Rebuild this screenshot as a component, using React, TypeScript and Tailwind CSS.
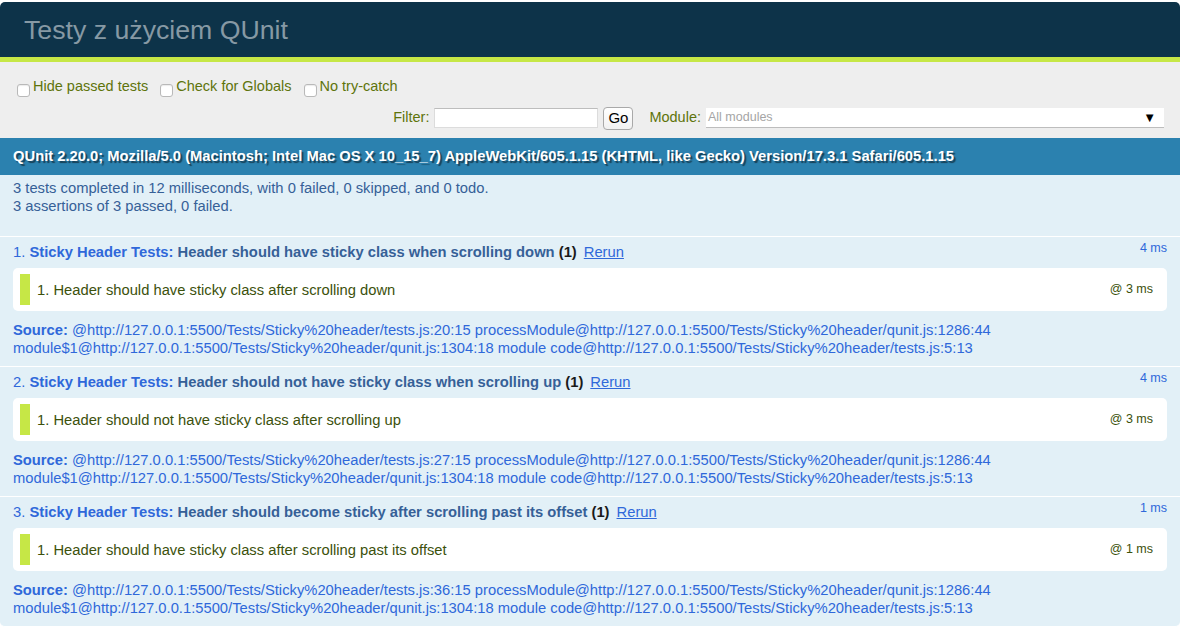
import React from "react";

const tests = [
  {
    n: 1,
    name: "Header should have sticky class when scrolling down",
    rt: "4 ms",
    assert: "Header should have sticky class after scrolling down",
    art: "@ 3 ms",
    line: "20:15",
  },
  {
    n: 2,
    name: "Header should not have sticky class when scrolling up",
    rt: "4 ms",
    assert: "Header should not have sticky class after scrolling up",
    art: "@ 3 ms",
    line: "27:15",
  },
  {
    n: 3,
    name: "Header should become sticky after scrolling past its offset",
    rt: "1 ms",
    assert: "Header should have sticky class after scrolling past its offset",
    art: "@ 1 ms",
    line: "36:15",
  },
];

function Check({ label }: { label: string }) {
  return (
    <label className="flex items-center">
      <span className="inline-block w-[13px] h-[13px] rounded-[3px] border border-[#b9b9b9] bg-white translate-y-[3px] mr-[3px] shadow-[inset_0_1px_1px_rgba(0,0,0,0.08)]" />
      <span>{label}</span>
    </label>
  );
}

export default function App() {
  return (
    <div className="w-[1185px] h-[631px] overflow-hidden bg-white pt-[2px] pr-[5px] font-['Liberation_Sans',Arial,sans-serif] text-[14.75px]">
      <div className="w-[1180px]">
        {/* Header */}
        <div className="h-[55px] bg-[#0D3349] rounded-t-[5px] flex items-center pl-[24px]">
          <h1 className="text-[26.7px] leading-[27px] font-normal text-[#8699A4] translate-y-[1px]">
            Testy z użyciem QUnit
          </h1>
        </div>
        {/* Banner */}
        <div className="h-[5px] bg-[#C6E746]" />
        {/* Toolbar */}
        <div className="bg-[#EEEEEE] text-[#5E740B] pt-[15px] pb-[8px] pl-[17px] pr-[16px] text-[14.5px]">
          <div className="h-[20px] flex items-center gap-[12px]">
            <Check label="Hide passed tests" />
            <Check label="Check for Globals" />
            <Check label="No try-catch" />
          </div>
          <div className="mt-[9px] h-[24px] flex items-center justify-end">
            <span>Filter:</span>
            <span className="ml-[5px] w-[164px] h-[20px] bg-white border border-[#dcdcdc] border-t-[#bdbdbd]" />
            <span className="ml-[5px] w-[30px] h-[23px] rounded-[4px] border border-[#a9a9a9] bg-gradient-to-b from-white to-[#f1f1f1] text-black text-[15px] flex items-center justify-center">
              Go
            </span>
            <span className="ml-[16px]">Module:</span>
            <span className="ml-[5px] w-[458px] h-[20px] bg-white border-b border-[#bdbdbd] flex items-center justify-between pl-[2px] pr-[8px]">
              <span className="text-[12.5px] text-[#a5a5a5]">All modules</span>
              <span className="text-[13px] text-black leading-none">▼</span>
            </span>
          </div>
        </div>
        {/* User agent */}
        <div className="h-[37px] bg-[#2B81AF] text-white font-bold flex items-center pl-[13px] [text-shadow:2px_2px_1px_rgba(0,0,0,0.5)]">
          QUnit 2.20.0; Mozilla/5.0 (Macintosh; Intel Mac OS X 10_15_7) AppleWebKit/605.1.15 (KHTML, like Gecko) Version/17.3.1 Safari/605.1.15
        </div>
        {/* Test result */}
        <div className="h-[62px] bg-[#E2F0F7] text-[#366097] pt-[4px] pl-[13px] leading-[18px] border-b border-white">
          <div>3 tests completed in 12 milliseconds, with 0 failed, 0 skipped, and 0 todo.</div>
          <div>3 assertions of 3 passed, 0 failed.</div>
        </div>
        {/* Tests */}
        <ol>
          {tests.map((t, i) => (
            <li
              key={t.n}
              className={
                "bg-[#E2F0F7] text-[#2F68DA] px-[13px] pt-[6px] pb-[5px] border-b border-white" +
                (i === tests.length - 1 ? " rounded-b-[5px]" : "")
              }
            >
              <div className="h-[18px] leading-[18px] flex items-start">
                <div className="flex-1 whitespace-nowrap">
                  <span>{t.n}. </span>
                  <strong className="font-bold">Sticky Header Tests: </strong>
                  <strong className="font-bold text-[#366097]">{t.name}</strong>{" "}
                  <b className="text-[#1a1a1a]">(1)</b>
                  <a className="ml-[7px] underline text-[#2F68DA]">Rerun</a>
                </div>
                <span className="text-[12.5px] leading-[13px] -mt-[1px]">{t.rt}</span>
              </div>
              <ol className="mt-[7px] bg-white rounded-[5px] py-[6px] px-[7px]">
                <li className="border-l-[10px] border-[#C6E746] py-[7px] pl-[7px] pr-[7px] leading-[17px] text-[#3C510C] flex items-center">
                  <span className="flex-1 translate-y-[1px]">1. {t.assert}</span>
                  <span className="text-[12.5px]">{t.art}</span>
                </li>
              </ol>
              <p className="mt-[9px] mb-[5px] leading-[18px] translate-y-[1px]">
                <strong className="font-bold">Source: </strong>
                @http://127.0.0.1:5500/Tests/Sticky%20header/tests.js:{t.line} processModule@http://127.0.0.1:5500/Tests/Sticky%20header/qunit.js:1286:44 module$1@http://127.0.0.1:5500/Tests/Sticky%20header/qunit.js:1304:18 module code@http://127.0.0.1:5500/Tests/Sticky%20header/tests.js:5:13
              </p>
            </li>
          ))}
        </ol>
      </div>
    </div>
  );
}
